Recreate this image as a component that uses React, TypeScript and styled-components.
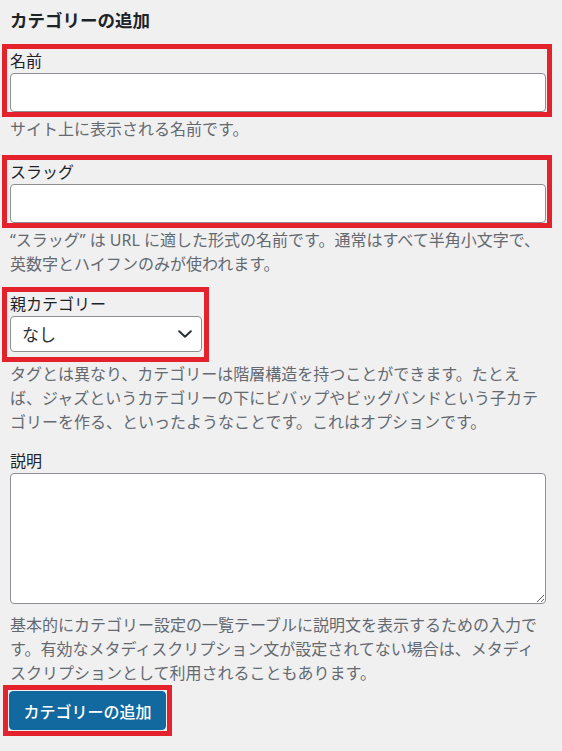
import styled, { createGlobalStyle } from "styled-components";

const GlobalStyle = createGlobalStyle`
  html, body {
    margin: 0;
    padding: 0;
    background-color: #f0f0f1;
  }

  body {
    font-family: "Noto Sans", "Noto Sans CJK JP", sans-serif;
    color: #1d2327;
  }
`;

const App = () => {
  return (
    <>
      <GlobalStyle />
      <Page>
        <Title>カテゴリーの追加</Title>

        <Highlight $variant="field">
          <Label htmlFor="tag-name">名前</Label>
          <TextInput id="tag-name" type="text" />
        </Highlight>
        <Hint>サイト上に表示される名前です。</Hint>

        <Highlight $variant="field" $gap={14}>
          <Label htmlFor="tag-slug">スラッグ</Label>
          <TextInput id="tag-slug" type="text" />
        </Highlight>
        <Hint>
          “スラッグ” は URL に適した形式の名前です。通常はすべて半角小文字で、英数字とハイフンのみが使われます。
        </Hint>

        <Highlight $variant="select" $gap={11}>
          <Label htmlFor="parent">親カテゴリー</Label>
          <SelectWrap>
            <Select id="parent" defaultValue="-1">
              <option value="-1">なし</option>
            </Select>
            <Chevron viewBox="0 0 14 8" aria-hidden="true">
              <path d="M1.2 1.2 L7 6.8 L12.8 1.2" />
            </Chevron>
          </SelectWrap>
        </Highlight>
        <Hint>
          タグとは異なり、カテゴリーは階層構造を持つことができます。たとえば、ジャズというカテゴリーの下にビバップやビッグバンドという子カテゴリーを作る、といったようなことです。これはオプションです。
        </Hint>

        <Field>
          <Label htmlFor="tag-description">説明</Label>
          <TextArea id="tag-description" />
        </Field>
        <Hint $gap={9}>
          基本的にカテゴリー設定の一覧テーブルに説明文を表示するための入力です。有効なメタディスクリプション文が設定されてない場合は、メタディスクリプションとして利用されることもあります。
        </Hint>

        <Highlight $variant="button">
          <SubmitButton type="button">カテゴリーの追加</SubmitButton>
        </Highlight>
      </Page>
    </>
  );
};

export default App;

const Page = styled.div`
  width: 536px;
  padding: 8px 16px 0 10px;
`;

const Title = styled.h2`
  margin: 0 0 12px;
  font-size: 17.5px;
  line-height: 24px;
  font-weight: 700;
  color: #1d2327;
`;

type Variant = "field" | "select" | "button";

const Highlight = styled.div<{ $variant: Variant; $gap?: number }>`
  border: 5px solid #e3222c;
  margin-top: ${(p) => p.$gap ?? 0}px;

  ${(p) =>
    p.$variant === "field" &&
    `
    margin-left: -8px;
    margin-right: -6px;
    padding: 0 1px 0 3px;
  `}

  ${(p) =>
    p.$variant === "select" &&
    `
    width: fit-content;
    margin-left: -8px;
    padding: 0 2px 5px 3px;
  `}

  ${(p) =>
    p.$variant === "button" &&
    `
    width: fit-content;
    margin-left: -7px;
    padding: 1px;
  `}
`;

const Field = styled.div`
  margin-top: 15px;
`;

const Label = styled.label`
  display: block;
  font-size: 16px;
  line-height: 24px;
  font-weight: 400;
  color: #1d2327;
`;

const TextInput = styled.input`
  display: block;
  box-sizing: border-box;
  width: 100%;
  height: 39px;
  margin: 0;
  padding: 0 10px;
  border: 1px solid #8c8f94;
  border-radius: 4px;
  background: #fff;
  font: inherit;
  font-size: 16px;
  outline: none;
`;

const Hint = styled.p<{ $gap?: number }>`
  margin: ${(p) => p.$gap ?? 0}px 0 0;
  font-size: 16px;
  line-height: 24px;
  color: #646970;
`;

const SelectWrap = styled.div`
  position: relative;
  width: 192px;
  height: 36px;
`;

const Select = styled.select`
  box-sizing: border-box;
  width: 100%;
  height: 100%;
  margin: 0;
  padding: 0 32px 0 11px;
  border: 1px solid #8c8f94;
  border-radius: 4px;
  background: #fff;
  appearance: none;
  font-family: inherit;
  font-size: 17px;
  color: #2c3338;
  outline: none;
`;

const Chevron = styled.svg`
  position: absolute;
  top: 14px;
  right: 10px;
  width: 14px;
  height: 8px;
  fill: none;
  stroke: #2c3338;
  stroke-width: 2;
  stroke-linecap: round;
  stroke-linejoin: round;
  pointer-events: none;
`;

const TextArea = styled.textarea`
  display: block;
  box-sizing: border-box;
  width: 100%;
  height: 131px;
  margin: 0;
  padding: 6px 10px;
  border: 1px solid #8c8f94;
  border-radius: 4px;
  background: #fff;
  font: inherit;
  font-size: 16px;
  outline: none;
`;

const SubmitButton = styled.button`
  display: block;
  width: 157px;
  height: 39px;
  margin: 0;
  padding: 0;
  border: 1px solid #1169a0;
  border-radius: 4px;
  background-color: #1169a0;
  color: #fff;
  font-family: inherit;
  font-size: 16px;
  font-weight: 500;
  cursor: pointer;
`;
